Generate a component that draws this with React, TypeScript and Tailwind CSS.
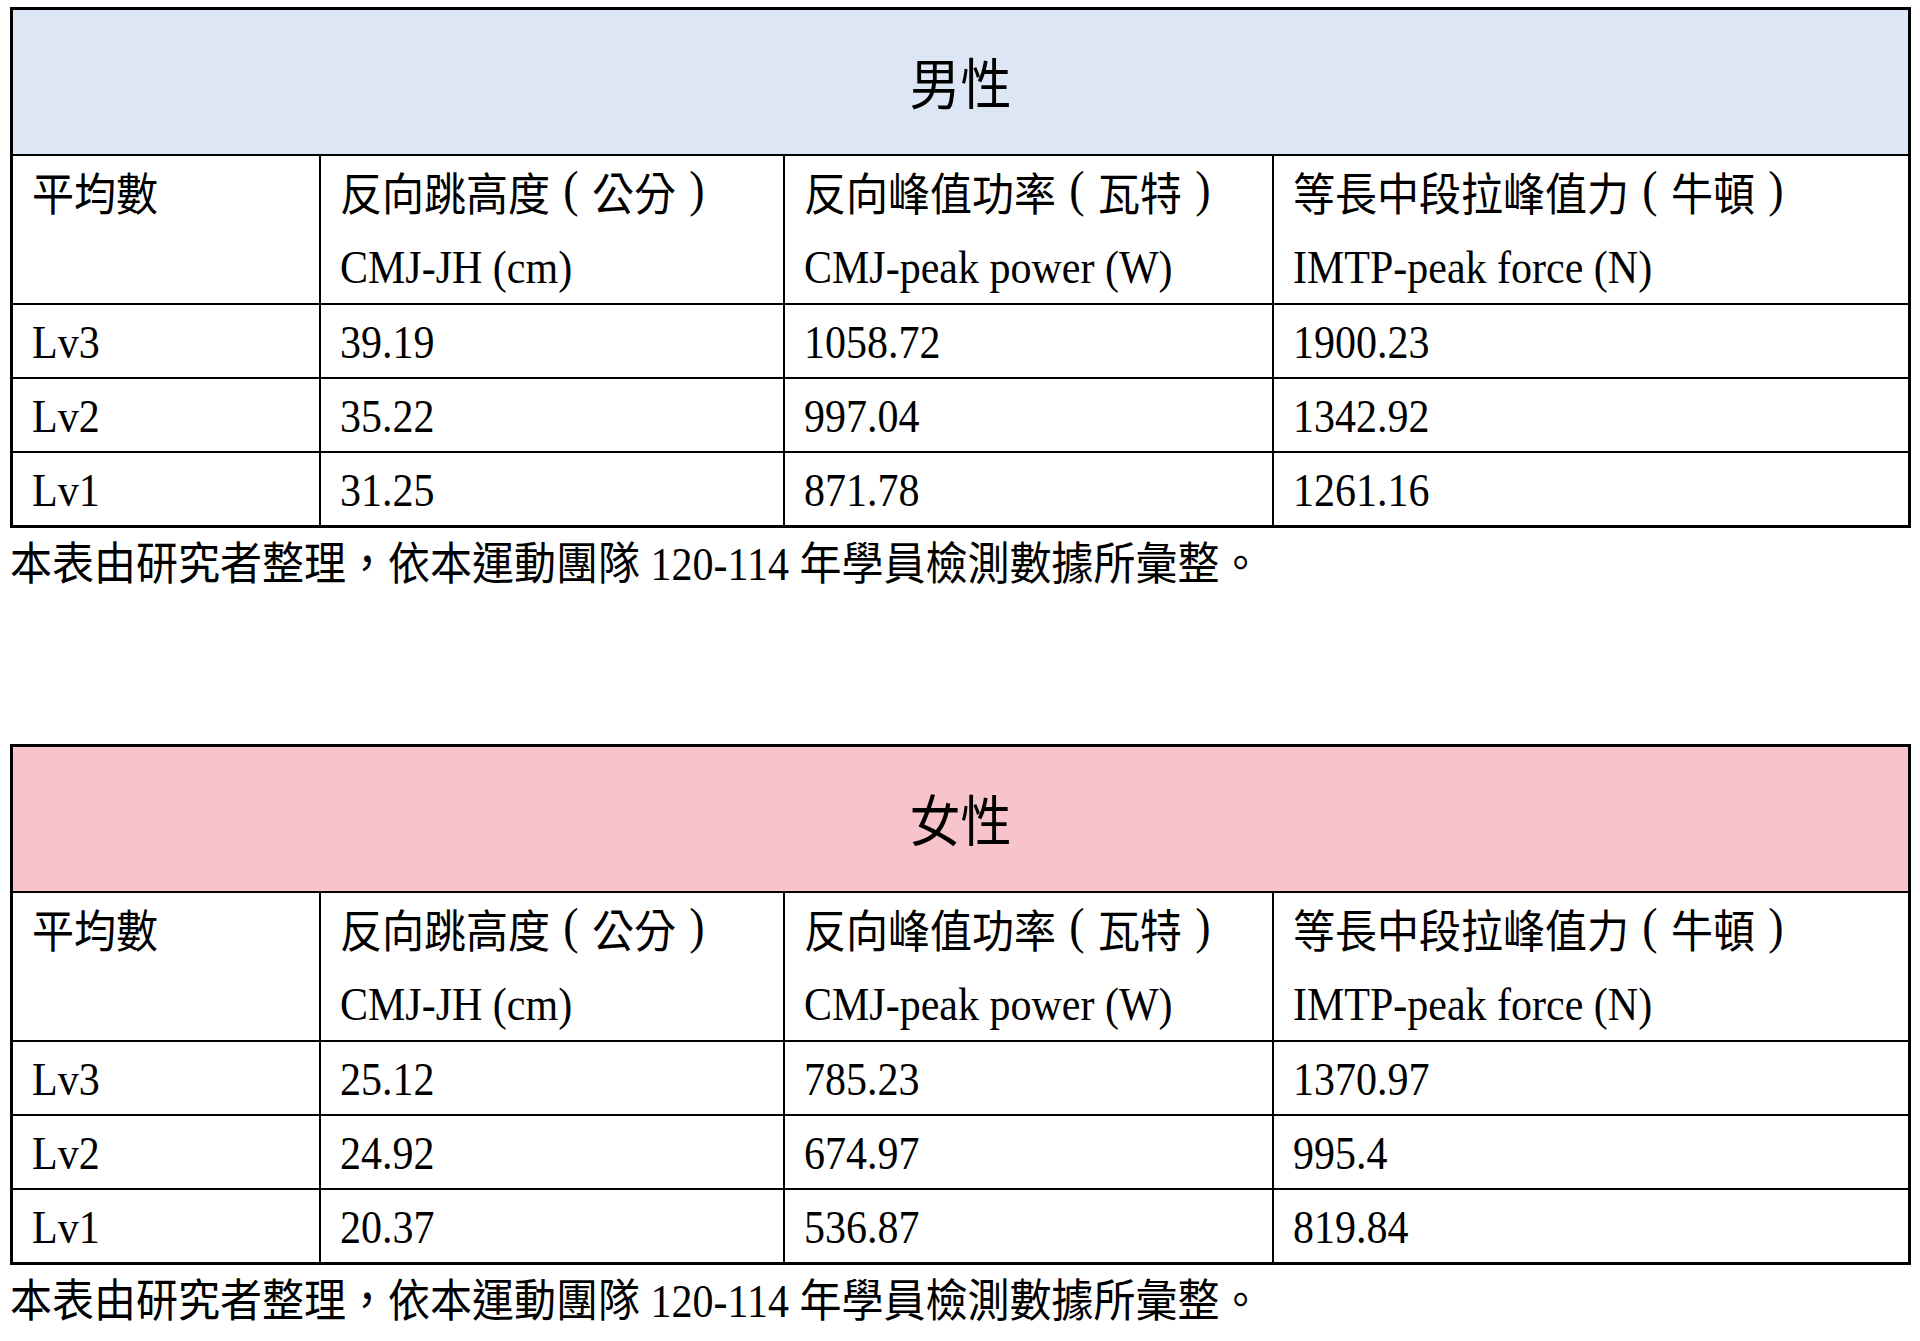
import { Fragment } from "react"

const headers: [string, string][] = [
  ["平均數", ""],
  ["反向跳高度（公分）", "CMJ-JH (cm)"],
  ["反向峰值功率（瓦特）", "CMJ-peak power (W)"],
  ["等長中段拉峰值力（牛頓）", "IMTP-peak force (N)"],
]

const tables = [
  {
    title: "男性",
    bg: "bg-[#dde6f4]",
    rows: [
      ["Lv3", "39.19", "1058.72", "1900.23"],
      ["Lv2", "35.22", "997.04", "1342.92"],
      ["Lv1", "31.25", "871.78", "1261.16"],
    ],
  },
  {
    title: "女性",
    bg: "bg-[#f8c4cb]",
    rows: [
      ["Lv3", "25.12", "785.23", "1370.97"],
      ["Lv2", "24.92", "674.97", "995.4"],
      ["Lv1", "20.37", "536.87", "819.84"],
    ],
  },
]

const note = "本表由研究者整理，依本運動團隊 120-114 年學員檢測數據所彙整。"

const rowGrid = "grid grid-cols-[306px_464px_489px_1fr] border-t-2 border-black"

// full-width parens sit centred in their em box in the source document
function Zh({ text }: { text: string }) {
  const parts = text.split(/([（）])/)
  return (
    <>
      {parts.map((p, i) =>
        p === "（" || p === "）" ? (
          <span key={i} className="inline-block w-[42px] text-center text-[46px] leading-none -translate-y-[5px]">
            {p === "（" ? "(" : ")"}
          </span>
        ) : (
          <Fragment key={i}>{p}</Fragment>
        )
      )}
    </>
  )
}

function DataTable({ title, bg, rows }: { title: string; bg: string; rows: string[][] }) {
  return (
    <div className="w-[1901px] border-[3px] border-black">
      {/* title band */}
      <div className={`h-[144px] ${bg} flex items-center justify-center pt-[8px] text-[51px] leading-none`}>
        <div className="scale-y-[1.08]">{title}</div>
      </div>

      {/* column headers */}
      <div className={`${rowGrid} h-[149px]`}>
        {headers.map(([zh, en], i) => (
          <div key={zh} className={`${i > 0 ? "border-l-2 border-black" : ""} pl-[19px] pt-[4px]`}>
            <div className="h-[72px] leading-[72px] whitespace-nowrap scale-y-[1.08]">
              <Zh text={zh} />
            </div>
            {en && <div className="h-[72px] leading-[72px] whitespace-nowrap scale-y-[1.08]">{en}</div>}
          </div>
        ))}
      </div>

      {/* values */}
      {rows.map((row) => (
        <div key={row[0]} className={`${rowGrid} h-[74px]`}>
          {row.map((cell, i) => (
            <div key={i} className={`${i > 0 ? "border-l-2 border-black" : ""} pl-[19px] pt-[2px]`}>
              <div className="h-[70px] leading-[72px] scale-y-[1.08]">{cell}</div>
            </div>
          ))}
        </div>
      ))}
    </div>
  )
}

export default function App() {
  return (
    <div className="min-h-[1341px] w-[1920px] bg-white text-black text-[42px] font-['Liberation_Serif','Noto_Sans_CJK_TC',serif] pl-[10px] pt-[7px]">
      <DataTable {...tables[0]} />
      <div className="h-[74px] leading-[74px] whitespace-nowrap scale-y-[1.08]">{note}</div>

      <div className="mt-[142px]">
        <DataTable {...tables[1]} />
      </div>
      <div className="h-[74px] leading-[74px] whitespace-nowrap scale-y-[1.08]">{note}</div>
    </div>
  )
}
